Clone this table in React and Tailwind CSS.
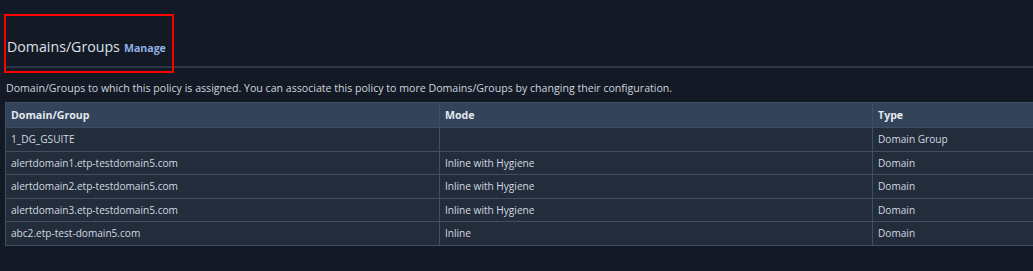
const rows = [
  { name: "1_DG_GSUITE", mode: "", type: "Domain Group" },
  { name: "alertdomain1.etp-testdomain5.com", mode: "Inline with Hygiene", type: "Domain" },
  { name: "alertdomain2.etp-testdomain5.com", mode: "Inline with Hygiene", type: "Domain" },
  { name: "alertdomain3.etp-testdomain5.com", mode: "Inline with Hygiene", type: "Domain" },
  { name: "abc2.etp-test-domain5.com", mode: "Inline", type: "Domain" },
];

const cols = "grid grid-cols-[434px_433px_435px]";

const App = () => {
  return (
    <div
      className="relative w-full h-[271px] overflow-hidden bg-[#131a25] pl-[5px] pt-[37px]"
      style={{ fontFamily: '"Open Sans", "Noto Sans", sans-serif' }}
    >
      {/* section header */}
      <div className="flex items-baseline gap-[4px] pl-[2px] leading-[20px]">
        <h2 className="text-[14.2px] font-normal text-[#dbe1e8]">Domains/Groups</h2>
        <a className="text-[10.6px] font-bold text-[#8fb1e3] cursor-pointer">Manage</a>
      </div>
      <div className="mt-[8px] ml-[1px] h-[2px] bg-[#2d3846]" />

      <p className="mt-[13px] text-[10.6px] leading-[15px] text-[#cfd5dd] pl-[1px]">
        Domain/Groups to which this policy is assigned. You can associate this policy to more
        Domains/Groups by changing their configuration.
      </p>

      {/* table */}
      <div className="mt-[6px] w-[1302px] border-l border-t border-[#3f4e63] text-[10.1px] leading-[14px] text-[#d3d9e1]">
        <div className={`${cols} bg-[#33435a] text-[10.6px] font-bold text-[#e3e8ee]`}>
          <div className="h-[25px] border-r border-b border-[#3f4e63] pl-[5px] pt-[5px]">Domain/Group</div>
          <div className="h-[25px] border-r border-b border-[#3f4e63] pl-[5px] pt-[5px]">Mode</div>
          <div className="h-[25px] border-r border-b border-[#3f4e63] pl-[5px] pt-[5px]">Type</div>
        </div>
        {rows.map((r) => (
          <div key={r.name} className={`${cols} bg-[#222c3b]`}>
            <div className="h-[23.5px] border-r border-b border-[#3f4e63] pl-[5px] pt-[4px]">{r.name}</div>
            <div className="h-[23.5px] border-r border-b border-[#3f4e63] pl-[5px] pt-[4px]">{r.mode}</div>
            <div className="h-[23.5px] border-r border-b border-[#3f4e63] pl-[5px] pt-[4px]">{r.type}</div>
          </div>
        ))}
      </div>

      {/* annotation box */}
      <div className="absolute left-[4px] top-[14px] w-[170px] h-[59px] border-2 border-[#ff0000] pointer-events-none" />
    </div>
  );
};

export default App;
